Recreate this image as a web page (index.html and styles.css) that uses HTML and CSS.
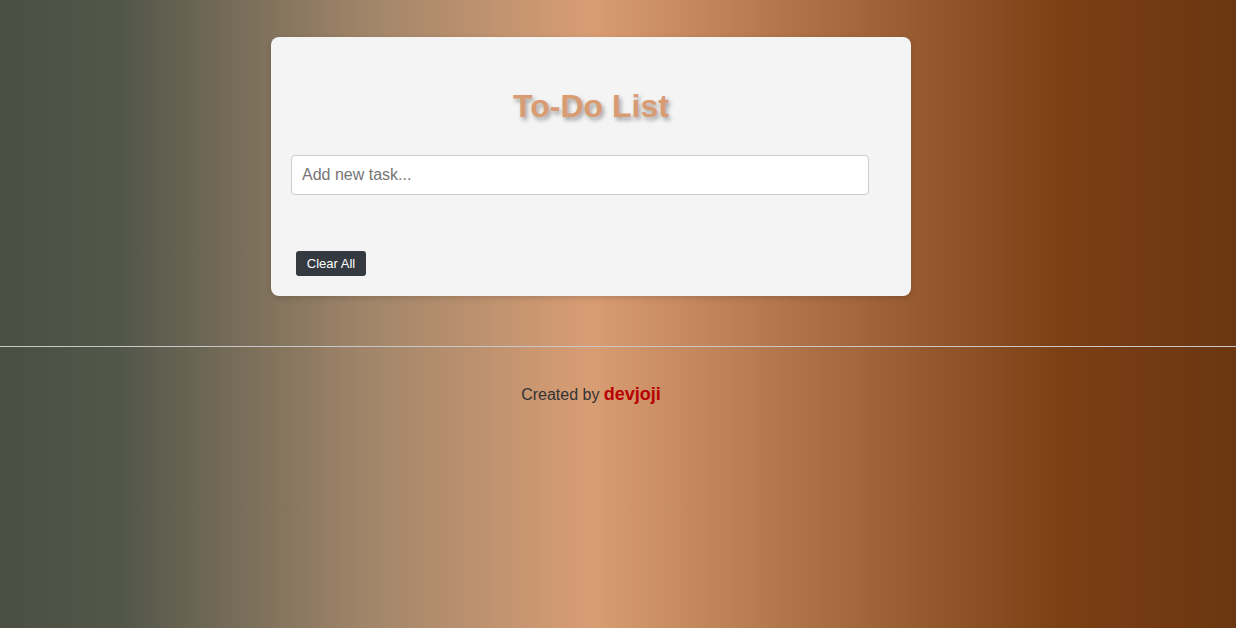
FILE: index.html
```html
<!DOCTYPE html>
<html>
<head>
<meta charset="utf-8">
<link rel="stylesheet" href="styles.css">
</head>
<body>
  <main class="page">
    <section class="card">
      <h1 class="title">To-Do List</h1>
      <input class="task-input" type="text" placeholder="Add new task...">
      <ul class="task-list"></ul>
      <button class="clear-btn">Clear All</button>
    </section>
  </main>
  <hr class="divider">
  <footer class="footer">
    <p>Created by <span class="author">devjoji</span></p>
  </footer>
</body>
</html>
```
FILE: styles.css
```css
html, body {
  margin: 0;
  height: 100%;
}
body {
  font-family: "Liberation Sans", Arial, sans-serif;
  background: linear-gradient(to right, #4b4f43 0%, #53574a 10%, #a2866a 30%, #d99d74 48%, #b0734a 64%, #7c3f14 86%, #6a3611 100%);
  color: #333;
}
.page {
  display: flex;
  justify-content: center;
  padding-top: 37px;
  padding-right: 54px;
}
.card {
  width: 600px;
  padding: 20px;
  background: #f4f4f4;
  border-radius: 8px;
  box-shadow: 0 2px 6px rgba(0,0,0,0.15);
  display: flex;
  flex-direction: column;
  align-items: flex-start;
}
.title {
  align-self: stretch;
  text-align: center;
  margin: 31px 0 30px;
  font-size: 32px;
  font-weight: bold;
  color: #d99b72;
  text-shadow: 2px 3px 4px rgba(0,0,0,0.35);
  line-height: 37px;
}
.task-input {
  width: 578px;
  height: 40px;
  box-sizing: border-box;
  padding: 0 10px;
  border: 1px solid #ccc;
  border-radius: 4px;
  font-family: "Liberation Sans", Arial, sans-serif;
  font-size: 16px;
  background: #fff;
  color: #333;
}
.task-input::placeholder {
  color: #757575;
}
.task-list {
  list-style: none;
  margin: 0;
  padding: 0;
  height: 56px;
}
.clear-btn {
  margin-left: 5px;
  width: 70px;
  height: 25px;
  padding: 0;
  border: none;
  border-radius: 3px;
  background: #343a40;
  color: #fff;
  font-family: "Liberation Sans", Arial, sans-serif;
  font-size: 13px;
}
.divider {
  margin: 50px 0 0;
  border: none;
  border-top: 1px solid #c8c8c8;
  height: 0;
}
.footer {
  text-align: center;
  padding-right: 54px;
}
.footer p {
  margin: 37px 0 0;
  font-size: 16px;
  color: #333;
}
.author {
  font-weight: bold;
  font-size: 18px;
  color: #b80000;
}
```
